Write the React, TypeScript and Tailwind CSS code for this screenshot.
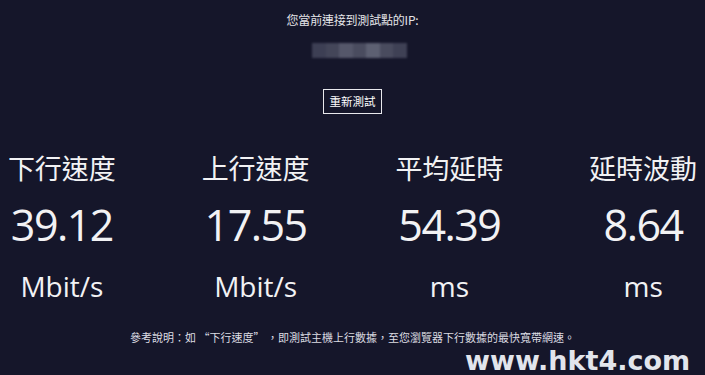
import React from "react";

const cols = [
  { label: "下行速度", value: "39.12", unit: "Mbit/s" },
  { label: "上行速度", value: "17.55", unit: "Mbit/s" },
  { label: "平均延時", value: "54.39", unit: "ms" },
  { label: "延時波動", value: "8.64", unit: "ms" },
];

const cjk = '"Noto Sans CJK TC", "Noto Sans CJK SC", sans-serif';
const latin = '"Open Sans", "Noto Sans", sans-serif';

export default function App() {
  return (
    <div
      className="relative w-[705px] h-[375px] overflow-hidden bg-[#15162a] text-[#f2f2f4] flex flex-col items-center"
      style={{ fontFamily: cjk }}
    >
      <div className="pt-[12px] text-[12px] leading-4 text-[#e4e4e8] tracking-[-0.2px]">
        您當前連接到測試點的IP:
      </div>
      <div className="mt-[15px] ml-[14px] flex h-[15px] w-[95px] blur-[1.2px]">
        <div className="flex-1 bg-[#3d3f54]" />
        <div className="flex-1 bg-[#444659]" />
        <div className="flex-1 bg-[#55576a]" />
        <div className="flex-1 bg-[#4a4c5f]" />
        <div className="flex-1 bg-[#5d6072]" />
        <div className="flex-1 bg-[#494b5e]" />
        <div className="flex-1 bg-[#3f4155]" />
      </div>
      <div className="mt-[31px] flex h-[25px] w-[59px] items-center justify-center border border-[#e8e8ec] text-[11.5px] leading-none text-white">
        重新測試
      </div>
      <div className="mt-[40px] flex w-full gap-[70px]">
        {cols.map((c) => (
          <div key={c.label} className="flex w-[124px] flex-col items-center">
            <div className="text-[27px] leading-none" style={{ fontFamily: cjk }}>
              {c.label}
            </div>
            <div
              className="mt-[22px] text-[43px] leading-none tracking-[-1.5px]"
              style={{ fontFamily: latin }}
            >
              {c.value}
            </div>
            <div className="mt-[26px] text-[28px] leading-none" style={{ fontFamily: latin }}>
              {c.unit}
            </div>
          </div>
        ))}
      </div>
      <div className="mt-[32px] text-[11px] leading-none text-[#dcdce2]">
        參考說明：如 “下行速度” ，即測試主機上行數據，至您瀏覽器下行數據的最快寬帶網速。
      </div>
      <div
        className="absolute left-[465px] top-[347px] text-[27px] font-bold leading-none tracking-[0px] text-[#e2e5ec]"
        style={{ fontFamily: '"DejaVu Sans", Verdana, sans-serif' }}
      >
        www.hkt4.com
      </div>
    </div>
  );
}
